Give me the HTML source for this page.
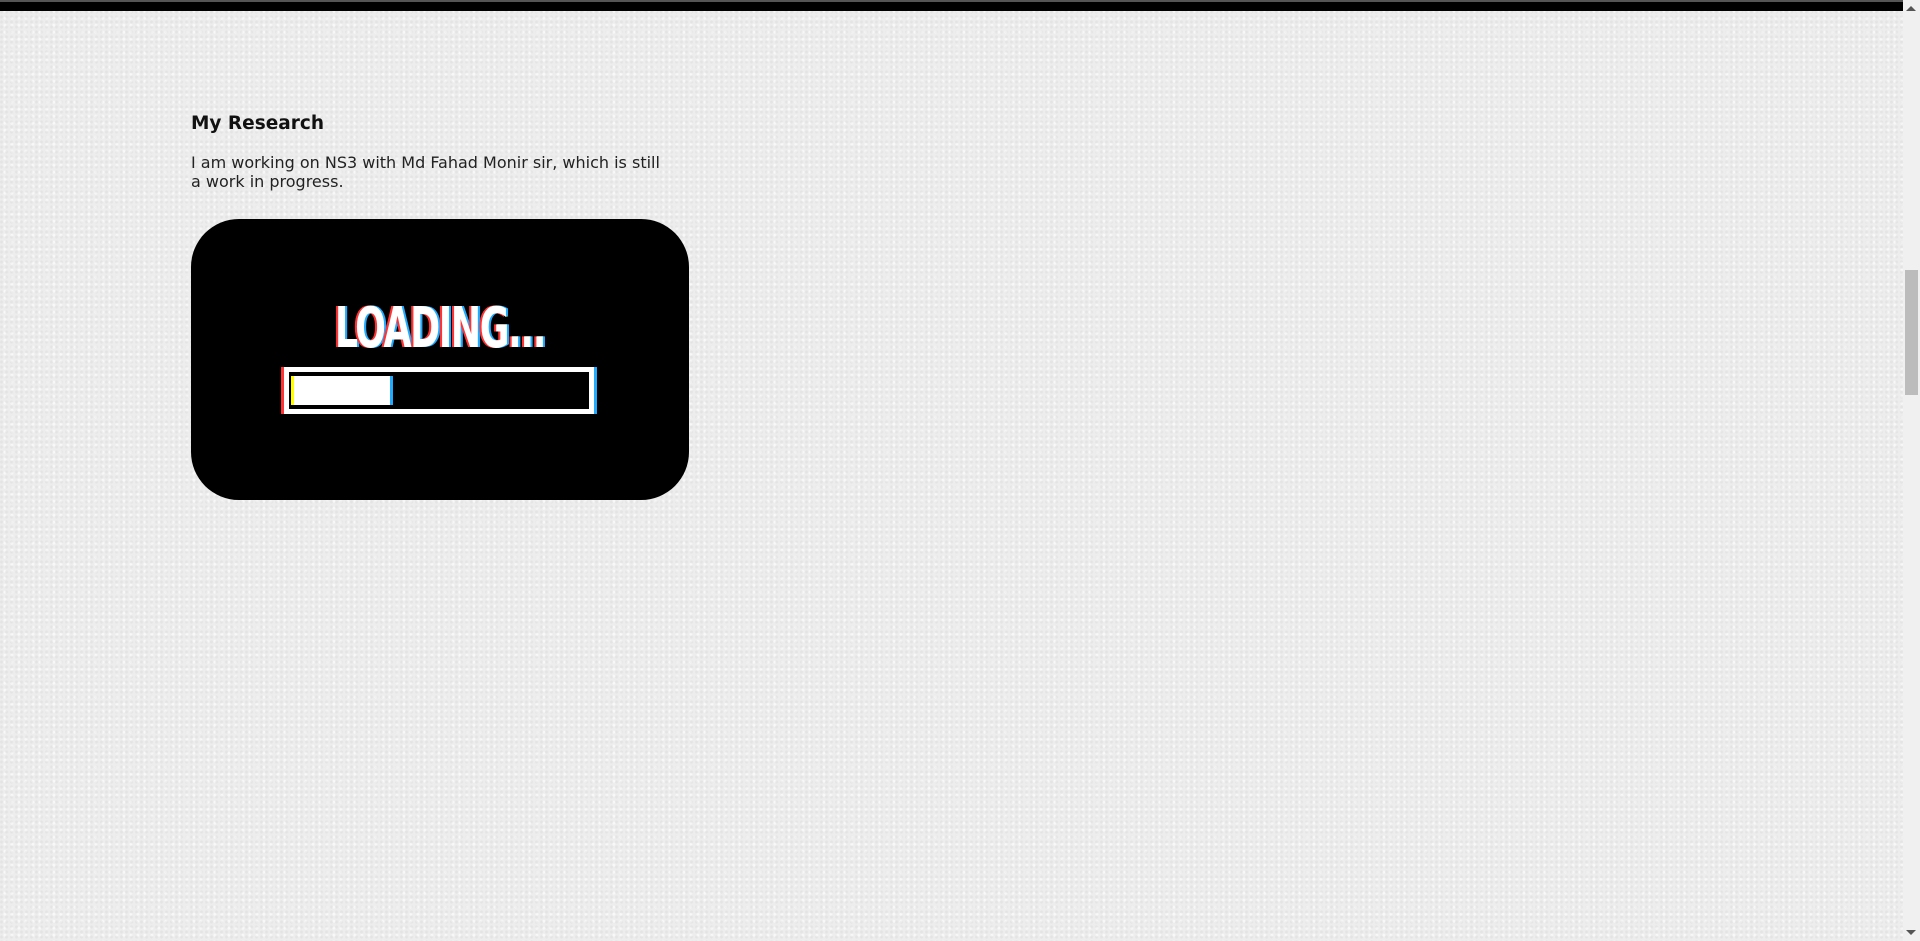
<!DOCTYPE html>
<html><head><meta charset="utf-8"><style>
html,body{margin:0;padding:0;}
body{width:1920px;height:941px;overflow:hidden;position:relative;
background:#ededed;
background-image:radial-gradient(circle at 30% 40%,rgba(0,0,0,0.04) 0 1px,transparent 2px),radial-gradient(circle at 70% 60%,rgba(255,255,255,0.6) 0 1px,transparent 2px);
background-size:5px 5px,7px 7px;
font-family:"DejaVu Sans","Liberation Sans",sans-serif;color:#111;}
.topbar{position:absolute;left:0;top:0;width:1903px;height:11px;background:#000;border-top:2px solid #555;box-sizing:border-box;}
.sb{position:absolute;right:0;top:0;width:17px;height:941px;background:#f0f0f0;}
.thumb{position:absolute;right:2px;top:270px;width:13px;height:125px;background:#bcbcbc;}
.arr{position:absolute;right:4px;width:0;height:0;border-left:5px solid transparent;border-right:5px solid transparent;}
h2{position:absolute;left:191px;top:113px;margin:0;font-size:18.5px;font-weight:bold;}
p{position:absolute;left:191px;top:153px;width:472px;margin:0;font-size:16px;line-height:19px;color:#222;}
.img{position:absolute;left:191px;top:219px;width:498px;height:281px;background:#000;border-radius:48px;overflow:hidden;}
.load{position:absolute;left:0;width:100%;top:82px;text-align:center;font-family:"DejaVu Sans Condensed","Liberation Sans Narrow",sans-serif;font-weight:bold;font-size:56px;line-height:56px;color:#fff;letter-spacing:-2px;transform:scaleX(0.72);text-shadow:-3px 0 #f33,3px 0 #2af,1px 0 #ff0;}
.bar{position:absolute;left:93px;top:148px;width:310px;height:47px;border:5px solid #fff;box-sizing:border-box;box-shadow:-3px 0 #f33,3px 0 #2af;}
.fill{position:absolute;left:5px;top:4px;width:96px;height:29px;background:#fff;box-shadow:3px 0 #2af,-3px 0 #ff0;}
</style></head><body>
<div class="topbar"></div>
<h2>My Research</h2>
<p>I am working on NS3 with Md Fahad Monir sir, which is still a work in progress.</p>
<div class="img"><div class="load">LOADING...</div><div class="bar"><div class="fill"></div></div></div>
<div class="sb"><div class="arr" style="top:6px;border-bottom:5px solid #555"></div><div class="thumb"></div><div class="arr" style="bottom:6px;border-top:5px solid #555"></div></div>
</body></html>
